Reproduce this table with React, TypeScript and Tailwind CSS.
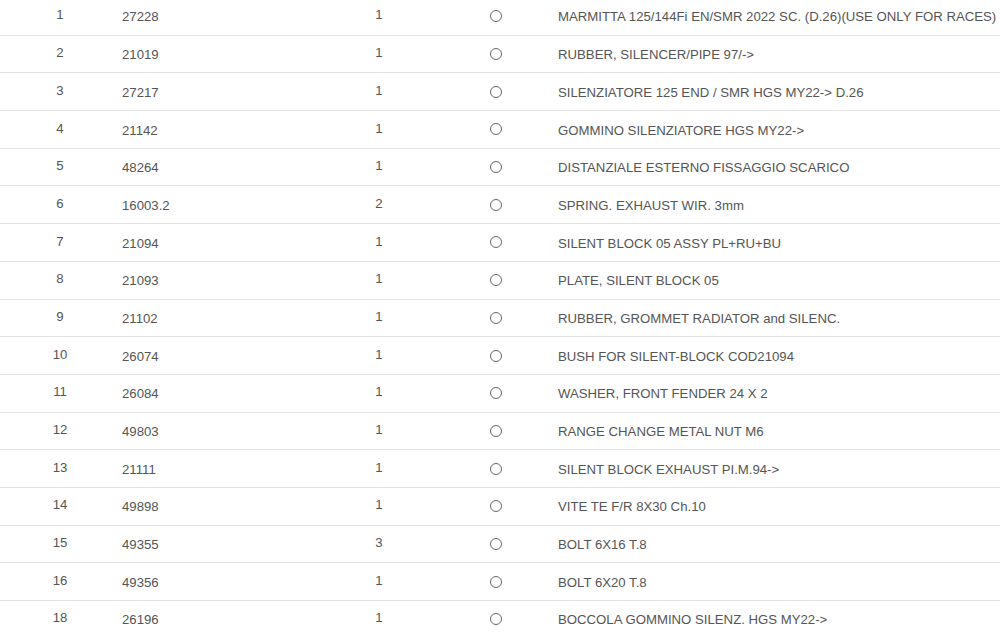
import React from "react";

const rows: [string, string, string, string][] = [
  ["1", "27228", "1", "MARMITTA 125/144Fi EN/SMR 2022 SC. (D.26)(USE ONLY FOR RACES)"],
  ["2", "21019", "1", "RUBBER, SILENCER/PIPE 97/->"],
  ["3", "27217", "1", "SILENZIATORE 125 END / SMR HGS MY22-> D.26"],
  ["4", "21142", "1", "GOMMINO SILENZIATORE HGS MY22->"],
  ["5", "48264", "1", "DISTANZIALE ESTERNO FISSAGGIO SCARICO"],
  ["6", "16003.2", "2", "SPRING. EXHAUST WIR. 3mm"],
  ["7", "21094", "1", "SILENT BLOCK 05 ASSY PL+RU+BU"],
  ["8", "21093", "1", "PLATE, SILENT BLOCK 05"],
  ["9", "21102", "1", "RUBBER, GROMMET RADIATOR and SILENC."],
  ["10", "26074", "1", "BUSH FOR SILENT-BLOCK COD21094"],
  ["11", "26084", "1", "WASHER, FRONT FENDER 24 X 2"],
  ["12", "49803", "1", "RANGE CHANGE METAL NUT M6"],
  ["13", "21111", "1", "SILENT BLOCK EXHAUST PI.M.94->"],
  ["14", "49898", "1", "VITE TE F/R 8X30 Ch.10"],
  ["15", "49355", "3", "BOLT 6X16 T.8"],
  ["16", "49356", "1", "BOLT 6X20 T.8"],
  ["18", "26196", "1", "BOCCOLA GOMMINO SILENZ. HGS MY22->"],
];

export default function App() {
  return (
    <div className="w-[1000px] h-[638px] overflow-hidden bg-white font-['Liberation_Sans',Arial,sans-serif] text-[13.2px] text-[#555]">
      <div className="-mt-[2px]">
        {rows.map(([n, code, qty, desc]) => (
          <div
            key={n}
            className="grid grid-cols-[120px_200px_118px_116px_1fr] items-center h-[37.7px] border-b border-[#e2e2e2]"
          >
            <div className="text-center -translate-y-[1px]">{n}</div>
            <div className="pl-[2px] translate-y-[1px]">{code}</div>
            <div className="text-center -translate-y-[1px]">{qty}</div>
            <div className="flex justify-center">
              <div className="w-[12px] h-[12px] rounded-full border border-[#666]" />
            </div>
            <div className="pl-[4px] whitespace-nowrap translate-y-[1px]">{desc}</div>
          </div>
        ))}
      </div>
    </div>
  );
}
